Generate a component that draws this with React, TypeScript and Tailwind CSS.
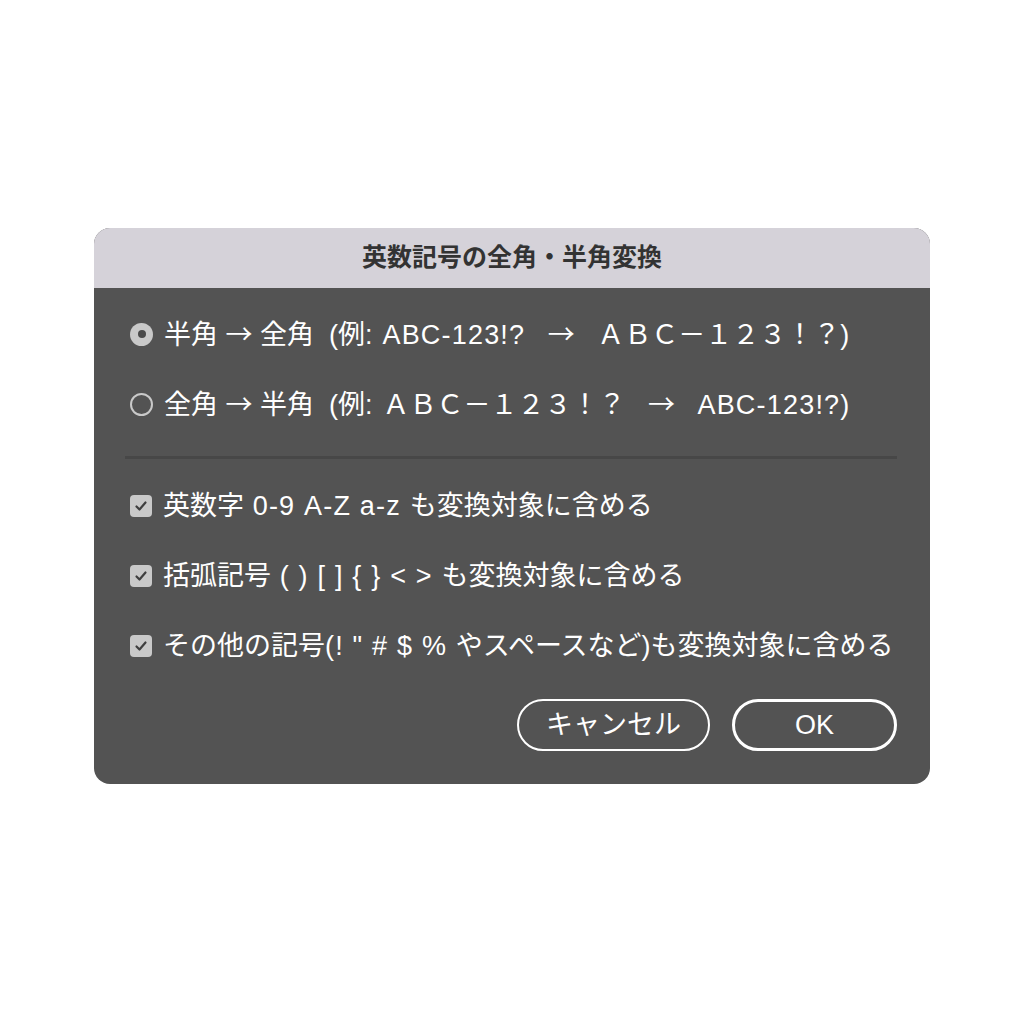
const FONT = "font-['Liberation_Sans','Noto_Sans_CJK_JP',sans-serif]";

function Radio({ checked }: { checked: boolean }) {
  return checked ? (
    <span className="flex h-[23px] w-[23px] shrink-0 items-center justify-center rounded-full bg-[#c9c9c9]">
      <span className="h-[8px] w-[8px] rounded-full bg-[#4a4a4a]" />
    </span>
  ) : (
    <span className="h-[23px] w-[23px] shrink-0 rounded-full border-2 border-[#c9c9c9]" />
  );
}

function Checkbox() {
  return (
    <span className="flex h-[22px] w-[22px] shrink-0 items-center justify-center rounded-[4px] bg-[#c9c9c9]">
      <svg width="14" height="14" viewBox="0 0 14 14" fill="none">
        <path d="M2.5 7.5 L5.5 10.5 L11.5 3.5" stroke="#3f3f3f" strokeWidth="2.2" strokeLinecap="round" strokeLinejoin="round" />
      </svg>
    </span>
  );
}

// CJK arrow, wider than the Arial one
function Arrow() {
  return <span className="font-['Noto_Sans_CJK_JP',sans-serif]">→</span>;
}

// latin runs are a bit wider in the original UI font
function L({ children }: { children: React.ReactNode }) {
  return <span className="tracking-[1.2px]">{children}</span>;
}

function Row({ icon, children }: { icon: React.ReactNode; children: React.ReactNode }) {
  return (
    <div className="flex h-[70px] items-center gap-[11px] pl-[5px] text-[27px] text-white">
      {icon}
      <span className="whitespace-pre">{children}</span>
    </div>
  );
}

export default function App() {
  return (
    <div className={`min-h-screen bg-white pt-[228px] ${FONT}`}>
      <div className="mx-auto w-[836px] overflow-hidden rounded-[16px] bg-[#535353]">
        <div className="flex h-[60px] items-center justify-center bg-[#d5d2d9] text-[25px] font-bold text-[#333]">
          英数記号の全角・半角変換
        </div>
        <div className="flex flex-col pb-[33px] pl-[31px] pr-[33px] pt-[11px]">
          <Row icon={<Radio checked />}>
            半角 <Arrow /> 全角  (例<L>: ABC-123!?</L>   <Arrow />   ＡＢＣ－１２３！？)
          </Row>
          <Row icon={<Radio checked={false} />}>
            全角 <Arrow /> 半角  (例<L>: </L>ＡＢＣ－１２３！？   <Arrow />   <L>ABC-123!?)</L>
          </Row>
          <div className="mt-[17px] h-[3px] bg-[#474747]" />
          <div className="mt-[12px] flex flex-col">
            <Row icon={<Checkbox />}>
              英数字<L> 0-9 A-Z a-z </L>も変換対象に含める
            </Row>
            <Row icon={<Checkbox />}>
              括弧記号<L> ( ) [ ] {"{"} {"}"} &lt; &gt; </L>も変換対象に含める
            </Row>
            <Row icon={<Checkbox />}>
              その他の記号<L>(! " # $ % </L>やスペースなど)も変換対象に含める
            </Row>
          </div>
          <div className="mt-[18px] flex justify-end gap-[22px]">
            <button className="h-[52px] w-[193px] rounded-full border-2 border-white text-[27px] text-white">
              キャンセル
            </button>
            <button className="h-[52px] w-[165px] rounded-full border-[3.5px] border-white text-[27px] text-white">
              OK
            </button>
          </div>
        </div>
      </div>
    </div>
  );
}
